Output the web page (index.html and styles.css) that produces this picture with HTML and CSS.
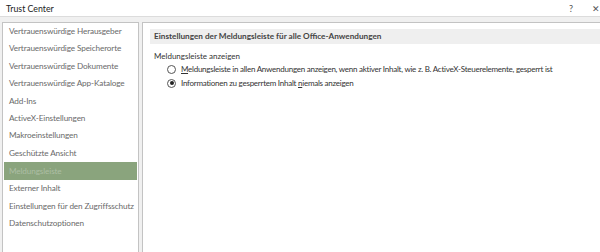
FILE: index.html
```html
<!DOCTYPE html>
<html lang="de">
<head>
<meta charset="UTF-8">
<title>Trust Center</title>
<link rel="stylesheet" href="styles.css">
</head>
<body>
<div class="titlebar">
  <span class="title">Trust Center</span>
  <span class="controls"><span class="help">?</span><span class="close">✕</span></span>
</div>
<div class="main">
  <ul class="nav">
    <li>Vertrauenswürdige Herausgeber</li>
    <li>Vertrauenswürdige Speicherorte</li>
    <li>Vertrauenswürdige Dokumente</li>
    <li>Vertrauenswürdige App-Kataloge</li>
    <li>Add-Ins</li>
    <li>ActiveX-Einstellungen</li>
    <li>Makroeinstellungen</li>
    <li>Geschützte Ansicht</li>
    <li class="active">Meldungsleiste</li>
    <li>Externer Inhalt</li>
    <li>Einstellungen für den Zugriffsschutz</li>
    <li>Datenschutzoptionen</li>
  </ul>
  <div class="content">
    <div class="section-head">Einstellungen der Meldungsleiste für alle Office-Anwendungen</div>
    <div class="group-label">Meldungsleiste anzeigen</div>
    <label class="radio"><span class="dot"></span><span><u>M</u>eldungsleiste in allen Anwendungen anzeigen, wenn aktiver Inhalt, wie z. B. ActiveX-Steuerelemente, gesperrt ist</span></label>
    <label class="radio checked"><span class="dot"></span><span>Informationen zu gesperrtem Inhalt <u>n</u>iemals anzeigen</span></label>
  </div>
</div>
</body>
</html>
```

FILE: styles.css
```css
body { margin: 0; background: #f0f0f0; font-family: Lato, "Open Sans", sans-serif; font-size: 8px; color: #333; overflow: hidden; height: 252px; }
.titlebar { height: 15px; background: #fff; border-bottom: 1px solid #dcdcdc; display: flex; justify-content: space-between; align-items: center; padding: 1px 0 0 6px; }
.title { font-size: 8.8px; color: #222; }
.controls { display: flex; gap: 19px; color: #555; font-size: 9px; }
.close { width: 8px; overflow: hidden; }
.main { display: flex; gap: 3px; padding: 5px 0 0 2px; height: 240px; }
.nav { list-style: none; margin: 0; padding: 0; width: 135px; background: #fff; border: 1px solid #c3c3c3; }
.nav li { height: 17.4px; line-height: 17.4px; padding-left: 6px; color: #6a6a6a; white-space: nowrap; font-size: 8.2px; letter-spacing: -0.12px; }
.nav li.active { background: #8aa47d; color: #adbea4; margin: 0 1px; padding-left: 5px; height: 18px; line-height: 18px; }
.content { flex: 1; background: #fff; border: 1px solid #c3c3c3; border-right: none; padding: 6px 0 0 7px; }
.section-head { background: #efefef; height: 15px; line-height: 15px; padding-left: 4px; font-weight: bold; color: #444; font-size: 8.2px; }
.group-label { margin: 6px 0 0 4px; height: 12px; line-height: 12px; color: #333; }
.radio { display: flex; align-items: center; gap: 5px; height: 14px; margin-left: 17px; color: #333; white-space: nowrap; letter-spacing: -0.25px; }
.dot { width: 7px; height: 7px; border: 1px solid #555; border-radius: 50%; background: #fff; flex: none; position: relative; }
.radio.checked .dot::after { content: ""; position: absolute; left: 1.5px; top: 1.5px; width: 4px; height: 4px; border-radius: 50%; background: #222; }
```
